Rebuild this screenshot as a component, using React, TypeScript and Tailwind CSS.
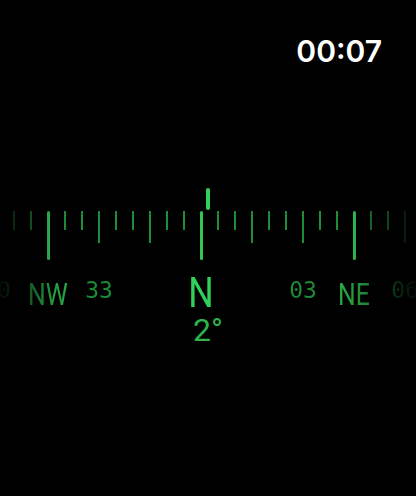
const HEADING = 2;

type Tick = { deg: number; kind: "minor" | "medium" | "major"; label?: string };

// ticks every 5°, from -60° to +60° around north
const ticks: Tick[] = Array.from({ length: 25 }, (_, i) => {
  const deg = (i - 12) * 5;
  const kind = deg % 45 === 0 ? "major" : deg % 15 === 0 ? "medium" : "minor";
  let label: string | undefined;
  if (deg === -45) label = "NW";
  else if (deg === 45) label = "NE";
  else if (deg === 0) label = "N";
  else if (deg % 30 === 0) label = String(((deg + 360) % 360) / 10).padStart(2, "0");
  return { deg, kind, label };
});

function TickMark({ kind }: { kind: Tick["kind"] }) {
  if (kind === "major") return <div className="w-[3px] h-[49px] rounded-full bg-[#30c955]" />;
  if (kind === "medium") return <div className="w-[2px] h-[32px] bg-[#1f8c38]" />;
  return <div className="w-[2px] h-[19px] bg-[#1f8c38]" />;
}

function Label({ text }: { text: string }) {
  if (text === "N")
    return (
      <span className="text-[42px] leading-none text-[#30d158] scale-x-[0.85] [font-family:Roboto,'Liberation_Sans',sans-serif]">
        N
      </span>
    );
  if (text === "NW" || text === "NE")
    return (
      <span className="mt-[7px] text-[31px] leading-none text-[#27aa46] scale-x-[0.8] [font-family:Roboto,'Liberation_Sans',sans-serif]">
        {text}
      </span>
    );
  return (
    <span className="mt-[7px] text-[23px] leading-none text-[#1c8a37] [font-family:'DejaVu_Sans_Mono',monospace]">
      {text}
    </span>
  );
}

export default function App() {
  return (
    <div className="w-[416px] h-[496px] bg-black overflow-hidden flex flex-col">
      {/* clock */}
      <div className="flex justify-end pt-[36px] pr-[34px]">
        <span className="text-[30px] leading-none font-semibold text-white [font-family:Inter,Roboto,sans-serif]">
          00:07
        </span>
      </div>

      {/* heading pointer */}
      <div className="mt-[122px] flex justify-center">
        <div className="w-[4px] h-[22px] rounded-full bg-[#30d158]" />
      </div>

      {/* scale, faded toward both edges */}
      <div className="mt-[1px] w-[416px] overflow-hidden [mask-image:linear-gradient(to_right,rgba(0,0,0,0.08)_0px,rgba(0,0,0,0.3)_14px,rgba(0,0,0,0.55)_31px,rgba(0,0,0,0.95)_55px,#000_80px,#000_340px,rgba(0,0,0,0.85)_360px,rgba(0,0,0,0.5)_388px,rgba(0,0,0,0.22)_405px,rgba(0,0,0,0.08)_416px)]">
        <div className="flex -ml-[11.5px]">
          {ticks.map((t) => (
            <div key={t.deg} className="w-[17px] shrink-0 flex justify-center items-start h-[49px]">
              <TickMark kind={t.kind} />
            </div>
          ))}
        </div>

        <div className="mt-[12px] flex -ml-[11.5px] h-[42px]">
          {ticks.map((t) => (
            <div key={t.deg} className="w-[17px] shrink-0 flex justify-center items-start whitespace-nowrap">
              {t.label && <Label text={t.label} />}
            </div>
          ))}
        </div>
      </div>

      {/* heading readout */}
      <div className="flex justify-center">
        <span className="text-[32px] leading-none text-[#2bb54b] [font-family:Roboto,'Liberation_Sans',sans-serif]">
          {HEADING}°
        </span>
      </div>
    </div>
  );
}
